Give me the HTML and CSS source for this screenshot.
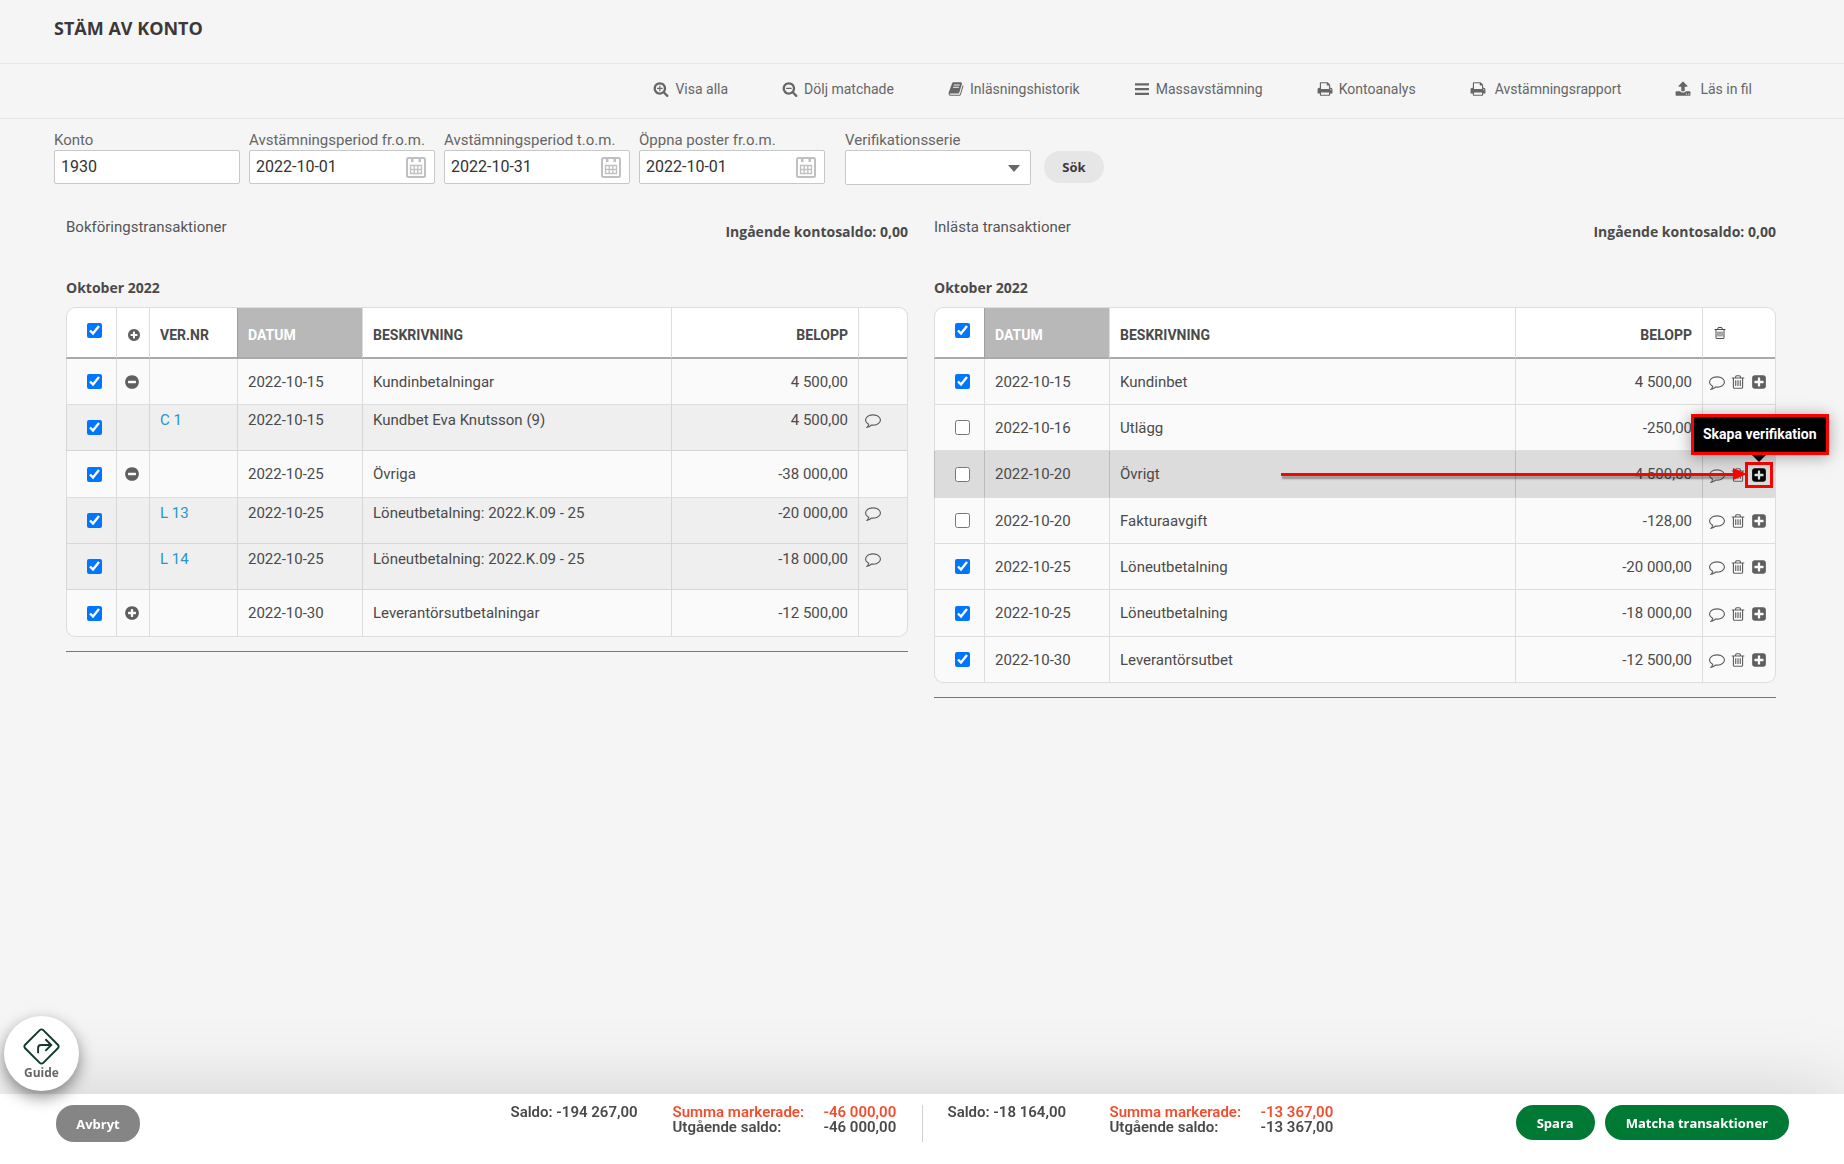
FILE: index.html
```
<!DOCTYPE html>
<html lang="sv">
<head>
    <meta charset="UTF-8">
    <meta name="viewport" content="width=device-width, initial-scale=1.0">
    <title>Stäm av konto</title>
    <link rel="stylesheet" href="styles.css">
</head>
<body>
    <!-- Ikoner -->
    <svg class="sprite" aria-hidden="true">
        <symbol id="i-zoomin" viewBox="0 0 1792 1792"><path d="M1088 800v64q0 13-9.5 22.5t-22.5 9.5h-224v224q0 13-9.5 22.5t-22.5 9.5h-64q-13 0-22.5-9.5t-9.5-22.5v-224h-224q-13 0-22.5-9.5t-9.5-22.5v-64q0-13 9.5-22.5t22.5-9.5h224v-224q0-13 9.5-22.5t22.5-9.5h64q13 0 22.5 9.5t9.5 22.5v224h224q13 0 22.5 9.5t9.5 22.5zm128 32q0-185-131.5-316.5t-316.5-131.5-316.5 131.5-131.5 316.5 131.5 316.5 316.5 131.5 316.5-131.5 131.5-316.5zm512 832q0 53-37.5 90.5t-90.5 37.5q-54 0-90-38l-343-342q-179 124-399 124-143 0-273.5-55.5t-225-150-150-225-55.5-273.5 55.5-273.5 150-225 225-150 273.5-55.5 273.5 55.5 225 150 150 225 55.5 273.5q0 220-124 399l343 343q37 37 37 90z"/></symbol>
        <symbol id="i-zoomout" viewBox="0 0 1792 1792"><path d="M1088 800v64q0 13-9.5 22.5t-22.5 9.5h-576q-13 0-22.5-9.5t-9.5-22.5v-64q0-13 9.5-22.5t22.5-9.5h576q13 0 22.5 9.5t9.5 22.5zm128 32q0-185-131.5-316.5t-316.5-131.5-316.5 131.5-131.5 316.5 131.5 316.5 316.5 131.5 316.5-131.5 131.5-316.5zm512 832q0 53-37.5 90.5t-90.5 37.5q-54 0-90-38l-343-342q-179 124-399 124-143 0-273.5-55.5t-225-150-150-225-55.5-273.5 55.5-273.5 150-225 225-150 273.5-55.5 273.5 55.5 225 150 150 225 55.5 273.5q0 220-124 399l343 343q37 37 37 90z"/></symbol>
        <symbol id="i-book" viewBox="0 0 1792 1792"><path d="M1703 478q40 57 18 129l-275 906q-19 64-76.5 107.5t-122.5 43.5h-923q-77 0-148.5-53.5t-99.5-131.5q-24-67-2-127 0-4 3-27t4-37q1-8-3-21.5t-3-19.5q2-11 8-21t16.5-23.5 16.5-23.5q23-38 45-91.5t30-91.5q3-10 .5-30t-.5-28q3-11 17-28t17-23q21-36 42-92t25-90q1-9-2.5-32t.5-28q4-13 22-30.5t22-22.5q19-26 42.5-84.5t27.5-96.5q1-8-3-25.5t-2-26.5q2-8 9-18t18-23 17-21q8-12 16.5-30.5t15-35 16-36 19.5-32 26.5-23.5 36-11.5 47.5 5.5l-1 3q38-9 51-9h761q74 0 114 56t18 130l-274 906q-36 119-71.5 153.5t-128.5 34.5h-869q-27 0-38 15-11 16-1 43 24 70 144 70h923q29 0 56-15.5t35-41.5l300-987q7-22 5-57 38 15 59 43zm-1064 2q-4 13 2 22.5t20 9.5h608q13 0 25.5-9.5t16.5-22.5l21-64q4-13-2-22.5t-20-9.5h-608q-13 0-25.5 9.5t-16.5 22.5zm-83 256q-4 13 2 22.5t20 9.5h608q13 0 25.5-9.5t16.5-22.5l21-64q4-13-2-22.5t-20-9.5h-608q-13 0-25.5 9.5t-16.5 22.5z"/></symbol>
        <symbol id="i-bars" viewBox="0 0 16 16"><path d="M1 2.200h14v2.200H1zM1 7h14v2.200H1zM1 11.800h14V14H1z"/></symbol>
        <symbol id="i-print" viewBox="0 0 1792 1792"><path d="M448 1536h896v-256h-896v256zm0-640h896v-384h-160q-40 0-68-28t-28-68v-160h-640v640zm1152 64q0-26-19-45t-45-19-45 19-19 45 19 45 45 19 45-19 19-45zm128 0v416q0 13-9.5 22.5t-22.5 9.5h-224v160q0 40-28 68t-68 28h-960q-40 0-68-28t-28-68v-160h-224q-13 0-22.5-9.5t-9.5-22.5v-416q0-79 56.5-135.5t135.5-56.5h64v-544q0-40 28-68t68-28h672q40 0 88 20t76 48l152 152q28 28 48 76t20 88v256h64q79 0 135.5 56.5t56.5 135.5z"/></symbol>
        <symbol id="i-upload" viewBox="0 0 1792 1792"><path d="M1344 1472q0-26-19-45t-45-19-45 19-19 45 19 45 45 19 45-19 19-45zm256 0q0-26-19-45t-45-19-45 19-19 45 19 45 45 19 45-19 19-45zm128-224v320q0 40-28 68t-68 28h-1472q-40 0-68-28t-28-68v-320q0-40 28-68t68-28h427q21 56 70.500 92t110.500 36h256q61 0 110.500-36t70.500-92h427q40 0 68 28t28 68zm-325-648q-17 40-59 40h-256v448q0 26-19 45t-45 19h-256q-26 0-45-19t-19-45v-448h-256q-42 0-59-40-17-39 14-69l448-448q18-19 45-19t45 19l448 448q31 30 14 69z"/></symbol>
        <symbol id="i-plus" viewBox="0 0 1792 1792"><path d="M1344 960v-128q0-26-19-45t-45-19h-256v-256q0-26-19-45t-45-19h-128q-26 0-45 19t-19 45v256h-256q-26 0-45 19t-19 45v128q0 26 19 45t45 19h256v256q0 26 19 45t45 19h128q26 0 45-19t19-45v-256h256q26 0 45-19t19-45zm320-64q0 209-103 385.5t-279.5 279.5-385.5 103-385.5-103-279.5-279.5-103-385.5 103-385.5 279.5-279.5 385.5-103 385.5 103 279.5 279.5 103 385.5z"/></symbol>
        <symbol id="i-minus" viewBox="0 0 1792 1792"><path d="M1344 960v-128q0-26-19-45t-45-19h-768q-26 0-45 19t-19 45v128q0 26 19 45t45 19h768q26 0 45-19t19-45zm320-64q0 209-103 385.5t-279.5 279.5-385.5 103-385.5-103-279.5-279.5-103-385.5 103-385.5 279.5-279.5 385.5-103 385.5 103 279.5 279.5 103 385.5z"/></symbol>
        <symbol id="i-square" viewBox="0 0 1792 1792"><path d="M1408 960v-128q0-26-19-45t-45-19h-320v-320q0-26-19-45t-45-19h-128q-26 0-45 19t-19 45v320h-320q-26 0-45 19t-19 45v128q0 26 19 45t45 19h320v320q0 26 19 45t45 19h128q26 0 45-19t19-45v-320h320q26 0 45-19t19-45zm256-544v960q0 119-84.5 203.5t-203.5 84.5h-960q-119 0-203.5-84.5t-84.5-203.5v-960q0-119 84.5-203.5t203.5-84.5h960q119 0 203.5 84.5t84.5 203.5z"/></symbol>
        <symbol id="i-comment" viewBox="0 0 1792 1792"><path d="M896 384q-204 0-381.5 69.5t-282 187.5-104.5 255q0 112 71.5 213.5t201.5 175.5l87 50-27 96q-24 91-70 172 152-63 275-171l43-38 57 6q69 8 130 8 204 0 381.5-69.5t282-187.5 104.5-255-104.5-255-282-187.5-381.5-69.5zm896 512q0 174-120 321.5t-326 233-450 85.5q-70 0-145-8-198 175-460 242-49 14-114 22h-5q-15 0-27-10.5t-16-27.5v-1q-3-4-.5-12t2-10 4.5-9.5l6-9 7-8.5 8-9q7-8 31-34.5t34.5-38 31-39.5 32.5-51 27-59 26-76q-157-89-247.5-220t-90.5-281q0-174 120-321.5t326-233 450-85.5 450 85.5 326 233 120 321.5z"/></symbol>
        <symbol id="i-trash" viewBox="0 0 1792 1792"><path d="M704 736v576q0 14-9 23t-23 9h-64q-14 0-23-9t-9-23v-576q0-14 9-23t23-9h64q14 0 23 9t9 23zm256 0v576q0 14-9 23t-23 9h-64q-14 0-23-9t-9-23v-576q0-14 9-23t23-9h64q14 0 23 9t9 23zm256 0v576q0 14-9 23t-23 9h-64q-14 0-23-9t-9-23v-576q0-14 9-23t23-9h64q14 0 23 9t9 23zm128 724v-948h-896v948q0 22 7 40.5t14.5 27 10.5 8.5h832q3 0 10.5-8.5t14.5-27 7-40.5zm-672-1076h448l-48-117q-7-9-17-11h-317q-10 2-17 11zm928 32v64q0 14-9 23t-23 9h-96v948q0 83-47 143.5t-113 60.5h-832q-66 0-113-58.5t-47-141.5v-952h-96q-14 0-23-9t-9-23v-64q0-14 9-23t23-9h309l70-167q15-37 54-63t79-26h320q40 0 79 26t54 63l70 167h309q14 0 23 9t9 23z"/></symbol>
        <symbol id="i-calendar" viewBox="0 0 20 21"><rect x="1" y="1" width="18" height="19" rx="1.500" fill="none" stroke="currentColor" stroke-width="2"/><path d="M5 1h2.500v4H5zM12.500 1H15v4h-2.500z" fill="currentColor"/><path d="M4.500 8.500h11v8h-11zM4.500 12.500h11M8.200 8.500v8M11.800 8.500v8" fill="none" stroke="currentColor" stroke-width="1.300"/></symbol>
    </svg>

    <header class="top">
        <h1>STÄM AV KONTO</h1>
    </header>

    <!-- Verktygsrad -->
    <nav class="tools">
        <a href="#"><svg class="icon"><use href="#i-zoomin"/></svg>Visa alla</a>
        <a href="#"><svg class="icon"><use href="#i-zoomout"/></svg>Dölj matchade</a>
        <a href="#"><svg class="icon"><use href="#i-book"/></svg>Inläsningshistorik</a>
        <a href="#"><svg class="icon"><use href="#i-bars"/></svg>Massavstämning</a>
        <a href="#"><svg class="icon"><use href="#i-print"/></svg>Kontoanalys</a>
        <a href="#" class="wide"><svg class="icon"><use href="#i-print"/></svg>Avstämningsrapport</a>
        <a href="#" class="wide"><svg class="icon"><use href="#i-upload"/></svg>Läs in fil</a>
    </nav>

    <!-- Urval -->
    <form class="filter">
        <div class="field">
            <label for="konto">Konto</label>
            <input type="text" id="konto" value="1930">
        </div>
        <div class="field">
            <label for="from">Avstämningsperiod fr.o.m.</label>
            <input type="text" id="from" value="2022-10-01">
            <svg class="cal"><use href="#i-calendar"/></svg>
        </div>
        <div class="field">
            <label for="tom">Avstämningsperiod t.o.m.</label>
            <input type="text" id="tom" value="2022-10-31">
            <svg class="cal"><use href="#i-calendar"/></svg>
        </div>
        <div class="field">
            <label for="open">Öppna poster fr.o.m.</label>
            <input type="text" id="open" value="2022-10-01">
            <svg class="cal"><use href="#i-calendar"/></svg>
        </div>
        <div class="field serie">
            <label for="serie">Verifikationsserie</label>
            <select id="serie"><option></option></select>
        </div>
        <button type="button" class="btn sok">Sök</button>
    </form>

    <main class="cols">
        <!-- Bokföringstransaktioner -->
        <section>
            <div class="head">
                <p>Bokföringstransaktioner</p>
                <strong>Ingående kontosaldo: 0,00</strong>
            </div>
            <h2>Oktober 2022</h2>
            <table>
                <colgroup>
                    <col class="c-check"><col class="c-fold"><col class="c-ver"><col class="c-date"><col><col class="c-sum"><col class="c-note">
                </colgroup>
                <thead>
                    <tr>
                        <th class="check"><input type="checkbox" aria-label="Markera alla" checked></th>
                        <th class="fold"><button type="button" aria-label="Visa alla rader"><svg class="icon small"><use href="#i-plus"/></svg></button></th>
                        <th>VER.NR</th>
                        <th class="sorted">DATUM</th>
                        <th>BESKRIVNING</th>
                        <th class="sum">BELOPP</th>
                        <th></th>
                    </tr>
                </thead>
                <tbody>
                    <tr>
                        <td class="check"><input type="checkbox" aria-label="Markera" checked></td>
                        <td class="fold"><button type="button" aria-label="Dölj"><svg class="icon"><use href="#i-minus"/></svg></button></td>
                        <td></td>
                        <td>2022-10-15</td>
                        <td>Kundinbetalningar</td>
                        <td class="sum">4 500,00</td>
                        <td></td>
                    </tr>
                    <tr class="sub">
                        <td class="check"><input type="checkbox" aria-label="Markera" checked></td>
                        <td></td>
                        <td><a href="#">C 1</a></td>
                        <td>2022-10-15</td>
                        <td>Kundbet Eva Knutsson (9)</td>
                        <td class="sum">4 500,00</td>
                        <td class="acts"><button type="button" aria-label="Kommentar"><svg class="icon"><use href="#i-comment"/></svg></button></td>
                    </tr>
                    <tr>
                        <td class="check"><input type="checkbox" aria-label="Markera" checked></td>
                        <td class="fold"><button type="button" aria-label="Dölj"><svg class="icon"><use href="#i-minus"/></svg></button></td>
                        <td></td>
                        <td>2022-10-25</td>
                        <td>Övriga</td>
                        <td class="sum">-38 000,00</td>
                        <td></td>
                    </tr>
                    <tr class="sub">
                        <td class="check"><input type="checkbox" aria-label="Markera" checked></td>
                        <td></td>
                        <td><a href="#">L 13</a></td>
                        <td>2022-10-25</td>
                        <td>Löneutbetalning: 2022.K.09 - 25</td>
                        <td class="sum">-20 000,00</td>
                        <td class="acts"><button type="button" aria-label="Kommentar"><svg class="icon"><use href="#i-comment"/></svg></button></td>
                    </tr>
                    <tr class="sub">
                        <td class="check"><input type="checkbox" aria-label="Markera" checked></td>
                        <td></td>
                        <td><a href="#">L 14</a></td>
                        <td>2022-10-25</td>
                        <td>Löneutbetalning: 2022.K.09 - 25</td>
                        <td class="sum">-18 000,00</td>
                        <td class="acts"><button type="button" aria-label="Kommentar"><svg class="icon"><use href="#i-comment"/></svg></button></td>
                    </tr>
                    <tr>
                        <td class="check"><input type="checkbox" aria-label="Markera" checked></td>
                        <td class="fold"><button type="button" aria-label="Visa"><svg class="icon"><use href="#i-plus"/></svg></button></td>
                        <td></td>
                        <td>2022-10-30</td>
                        <td>Leverantörsutbetalningar</td>
                        <td class="sum">-12 500,00</td>
                        <td></td>
                    </tr>
                </tbody>
            </table>
            <hr>
        </section>

        <!-- Inlästa transaktioner -->
        <section>
            <div class="head">
                <p>Inlästa transaktioner</p>
                <strong>Ingående kontosaldo: 0,00</strong>
            </div>
            <h2>Oktober 2022</h2>
            <table>
                <colgroup>
                    <col class="c-check"><col class="c-date"><col><col class="c-sum"><col class="c-acts">
                </colgroup>
                <thead>
                    <tr>
                        <th class="check"><input type="checkbox" aria-label="Markera alla" checked></th>
                        <th class="sorted">DATUM</th>
                        <th>BESKRIVNING</th>
                        <th class="sum">BELOPP</th>
                        <th class="del"><button type="button" aria-label="Ta bort alla"><svg class="icon small"><use href="#i-trash"/></svg></button></th>
                    </tr>
                </thead>
                <tbody>
                    <tr>
                        <td class="check"><input type="checkbox" aria-label="Markera" checked></td>
                        <td>2022-10-15</td>
                        <td>Kundinbet</td>
                        <td class="sum">4 500,00</td>
                        <td class="acts">
                            <div>
                                <button type="button" aria-label="Kommentar"><svg class="icon"><use href="#i-comment"/></svg></button>
                                <button type="button" aria-label="Ta bort"><svg class="icon"><use href="#i-trash"/></svg></button>
                                <button type="button" aria-label="Skapa verifikation"><svg class="icon"><use href="#i-square"/></svg></button>
                            </div>
                        </td>
                    </tr>
                    <tr>
                        <td class="check"><input type="checkbox" aria-label="Markera"></td>
                        <td>2022-10-16</td>
                        <td>Utlägg</td>
                        <td class="sum">-250,00</td>
                        <td class="acts">
                            <div>
                                <button type="button" aria-label="Kommentar"><svg class="icon"><use href="#i-comment"/></svg></button>
                                <button type="button" aria-label="Ta bort"><svg class="icon"><use href="#i-trash"/></svg></button>
                                <button type="button" aria-label="Skapa verifikation"><svg class="icon"><use href="#i-square"/></svg></button>
                            </div>
                        </td>
                    </tr>
                    <tr class="active">
                        <td class="check"><input type="checkbox" aria-label="Markera"></td>
                        <td>2022-10-20</td>
                        <td>Övrigt</td>
                        <td class="sum">4 500,00</td>
                        <td class="acts">
                            <div>
                                <button type="button" aria-label="Kommentar"><svg class="icon"><use href="#i-comment"/></svg></button>
                                <button type="button" aria-label="Ta bort"><svg class="icon"><use href="#i-trash"/></svg></button>
                                <span class="target">
                                    <button type="button" aria-labelledby="tip"><svg class="icon"><use href="#i-square"/></svg></button>
                                    <span class="mark"></span>
                                    <span class="arrow"></span>
                                    <span class="tip" id="tip" role="tooltip">Skapa verifikation</span>
                                </span>
                            </div>
                        </td>
                    </tr>
                    <tr>
                        <td class="check"><input type="checkbox" aria-label="Markera"></td>
                        <td>2022-10-20</td>
                        <td>Fakturaavgift</td>
                        <td class="sum">-128,00</td>
                        <td class="acts">
                            <div>
                                <button type="button" aria-label="Kommentar"><svg class="icon"><use href="#i-comment"/></svg></button>
                                <button type="button" aria-label="Ta bort"><svg class="icon"><use href="#i-trash"/></svg></button>
                                <button type="button" aria-label="Skapa verifikation"><svg class="icon"><use href="#i-square"/></svg></button>
                            </div>
                        </td>
                    </tr>
                    <tr>
                        <td class="check"><input type="checkbox" aria-label="Markera" checked></td>
                        <td>2022-10-25</td>
                        <td>Löneutbetalning</td>
                        <td class="sum">-20 000,00</td>
                        <td class="acts">
                            <div>
                                <button type="button" aria-label="Kommentar"><svg class="icon"><use href="#i-comment"/></svg></button>
                                <button type="button" aria-label="Ta bort"><svg class="icon"><use href="#i-trash"/></svg></button>
                                <button type="button" aria-label="Skapa verifikation"><svg class="icon"><use href="#i-square"/></svg></button>
                            </div>
                        </td>
                    </tr>
                    <tr>
                        <td class="check"><input type="checkbox" aria-label="Markera" checked></td>
                        <td>2022-10-25</td>
                        <td>Löneutbetalning</td>
                        <td class="sum">-18 000,00</td>
                        <td class="acts">
                            <div>
                                <button type="button" aria-label="Kommentar"><svg class="icon"><use href="#i-comment"/></svg></button>
                                <button type="button" aria-label="Ta bort"><svg class="icon"><use href="#i-trash"/></svg></button>
                                <button type="button" aria-label="Skapa verifikation"><svg class="icon"><use href="#i-square"/></svg></button>
                            </div>
                        </td>
                    </tr>
                    <tr>
                        <td class="check"><input type="checkbox" aria-label="Markera" checked></td>
                        <td>2022-10-30</td>
                        <td>Leverantörsutbet</td>
                        <td class="sum">-12 500,00</td>
                        <td class="acts">
                            <div>
                                <button type="button" aria-label="Kommentar"><svg class="icon"><use href="#i-comment"/></svg></button>
                                <button type="button" aria-label="Ta bort"><svg class="icon"><use href="#i-trash"/></svg></button>
                                <button type="button" aria-label="Skapa verifikation"><svg class="icon"><use href="#i-square"/></svg></button>
                            </div>
                        </td>
                    </tr>
                </tbody>
            </table>
            <hr>
        </section>
    </main>

    <!-- Summering och knappar -->
    <footer class="bottom">
        <div class="left">
            <button type="button" class="btn cancel">Avbryt</button>
        </div>
        <div class="totals">
            <span>Saldo: -194 267,00</span>
            <span class="red">Summa markerade:</span>
            <span class="red">-46 000,00</span>
            <span class="under">Utgående saldo:</span>
            <span>-46 000,00</span>
        </div>
        <div class="totals">
            <span>Saldo: -18 164,00</span>
            <span class="red">Summa markerade:</span>
            <span class="red">-13 367,00</span>
            <span class="under">Utgående saldo:</span>
            <span>-13 367,00</span>
        </div>
        <div class="right">
            <button type="button" class="btn green">Spara</button>
            <button type="button" class="btn green">Matcha transaktioner</button>
        </div>
    </footer>

    <button type="button" class="guide">
        <svg viewBox="0 0 38 38"><path d="M17.200 2.200a2.500 2.500 0 0 1 3.600 0l15 15a2.500 2.500 0 0 1 0 3.600l-15 15a2.500 2.500 0 0 1-3.600 0l-15-15a2.500 2.500 0 0 1 0-3.600z"/><path d="M15.500 26v-5.500q0-3 3-3H28M23 11.500l6 6-6 6"/></svg>
        Guide
    </button>
</body>
</html>
```
FILE: styles.css
```
*{
    box-sizing: border-box;
}
body{
    margin: 0;
    min-height: 100vh;
    padding-bottom: 90px;
    background: #f5f5f5;
    color: #4a4a4a;
    font: 15px/20px Roboto, sans-serif;
}
h1, h2, p{
    margin: 0;
}
a{
    color: #2a94d0;
    text-decoration: none;
}
button{
    border: 0;
    padding: 0;
    background: none;
    color: inherit;
    cursor: pointer;
}
.sprite{
    position: absolute;
    width: 0;
    height: 0;
}
.icon{
    display: block;
    width: 16px;
    height: 16px;
    fill: currentColor;
}
.icon.small{
    width: 14px;
    height: 14px;
}

/* Rubrik */
.top{
    display: flex;
    align-items: center;
    height: 64px;
    padding: 0 54px 8px;
    border-bottom: 1px solid #e6e6e6;
}
h1{
    font: 700 18px/24px "Open Sans", sans-serif;
    color: #3c3838;
}

/* Verktygsrad */
.tools{
    display: flex;
    justify-content: flex-end;
    align-items: center;
    gap: 54px;
    height: 55px;
    padding: 0 92px 4px 54px;
    border-bottom: 1px solid #e6e6e6;
    font-size: 14px;
}
.tools a{
    display: flex;
    align-items: center;
    gap: 6px;
    color: #666;
}
.tools a.wide{
    gap: 9px;
}

/* Urval */
.filter{
    display: flex;
    gap: 9px;
    padding: 11px 54px 0;
}
.field{
    position: relative;
    width: 186px;
}
.field label{
    display: block;
    color: #666;
    white-space: nowrap;
}
.field input,
.field select{
    display: block;
    width: 100%;
    height: 34px;
    border: 1px solid #c8c8c8;
    border-radius: 2px;
    padding: 0 6px 2px;
    background: #fff;
    color: #333;
    font: 16px Roboto, sans-serif;
}
.field select{
    appearance: none;
    height: 35px;
}
.serie{
    margin-left: 11px;
}
.serie::after{
    content: "";
    position: absolute;
    right: 11px;
    bottom: 13px;
    border: 6px solid transparent;
    border-top: 7px solid #666;
    border-bottom: 0;
}
.cal{
    position: absolute;
    right: 9px;
    top: 27px;
    width: 20px;
    height: 21px;
    color: #c0c0c0;
}
.btn{
    border-radius: 18px;
    font: 700 13px/20px "Open Sans", sans-serif;
}
.sok{
    align-self: flex-end;
    width: 60px;
    height: 32px;
    margin: 0 0 2px 4px;
    background: #e6e6e6;
    color: #3c3838;
}

/* Tabeller */
.cols{
    display: grid;
    grid-template-columns: 1fr 1fr;
    gap: 26px;
    align-items: start;
    padding: 32px 68px 0 66px;
}
.head{
    display: flex;
    justify-content: space-between;
    color: #555;
}
.head strong{
    padding-top: 5px;
    font: 700 14px/20px "Open Sans", sans-serif;
    color: #4a4a4a;
}
h2{
    margin: 36px 0 9px;
    font: 700 14px/20px "Open Sans", sans-serif;
}
table{
    width: 100%;
    table-layout: fixed;
    border-collapse: separate;
    border-spacing: 0;
    border: 1px solid #ddd;
    border-width: 1px 1px 0 0;
    border-radius: 9px;
}
.c-check{ width: 50px; }
.c-fold{ width: 33px; }
.c-ver{ width: 88px; }
.c-date{ width: 125px; }
.c-sum{ width: 187px; }
.c-note{ width: 49px; }
.c-acts{ width: 73px; }
th, td{
    border: 1px solid #ddd;
    border-width: 0 0 1px 1px;
    padding: 0 10px;
    text-align: left;
    white-space: nowrap;
}
th{
    height: 51px;
    padding-top: 4px;
    border-bottom: 2px solid #aaa;
    background: #fff;
    font-size: 14px;
    font-weight: 700;
}
td{
    height: 46px;
    background: #fafafa;
}
tr:nth-child(3n) td{
    height: 47px;
}
.sub td{
    padding-top: 5px;
    background: #efefef;
    border-color: #d6d6d6;
    vertical-align: top;
}
.active td{
    background: #dcdcdc;
    border-left-color: #bbb;
}
th:first-child{ border-top-left-radius: 9px; }
th:last-child{ border-top-right-radius: 9px; }
tbody tr:last-child td:first-child{ border-bottom-left-radius: 9px; }
tbody tr:last-child td:last-child{ border-bottom-right-radius: 9px; }
th.sorted{
    background: #b8b8b8;
    border-left-color: #a0a0a0;
    color: #fff;
}
tr > .sum{
    text-align: right;
}
tr > .check{
    padding: 0 0 0 20px;
    vertical-align: middle;
}
th.check{
    padding-bottom: 4px;
}
.check input{
    display: block;
    width: 15px;
    height: 15px;
    margin: 0;
}
td.fold{
    padding: 0 0 0 7px;
}
tr > .acts{
    padding-left: 6px;
    padding-right: 0;
}
.acts button,
.fold button{
    display: block;
    color: #5f5f5f;
}
.sub .acts button{
    padding-top: 2px;
}
.acts div{
    display: flex;
    gap: 5px;
    padding-top: 1px;
}
hr{
    margin: 14px 0 0;
    border: 0;
    border-top: 1px solid #777;
}

/* Markerad ikon med tooltip */
.target{
    position: relative;
}
.acts .target button{
    color: #000;
}
.mark{
    position: absolute;
    inset: -5px -6px;
    border: 3px solid #f00;
}
.arrow{
    position: absolute;
    top: 6px;
    right: 34px;
    width: 452px;
    height: 3px;
    background: #f00;
    box-shadow: 1px 3px 2px rgba(0,0,0,.35);
}
.arrow::after{
    content: "";
    position: absolute;
    left: 100%;
    top: -5px;
    border: 6px solid transparent;
    border-left: 14px solid #f00;
    border-right: 0;
}
.tip{
    position: absolute;
    left: -60px;
    bottom: 28px;
    height: 41px;
    padding: 0 9px;
    border: 3px solid #f00;
    background: #000;
    box-shadow: 0 2px 16px rgba(0,0,0,.35);
    color: #fff;
    font-size: 14px;
    font-weight: 700;
    line-height: 35px;
}
.tip::after{
    content: "";
    position: absolute;
    left: 58px;
    top: 38px;
    border: 7px solid transparent;
    border-top-color: #000;
    border-bottom: 0;
}

/* Nederkant */
.bottom{
    position: fixed;
    left: 0;
    right: 0;
    bottom: 0;
    display: grid;
    grid-template-columns: 1fr auto auto 1fr;
    align-items: start;
    height: 70px;
    padding: 11px 55px 0 56px;
    background: #fff;
    box-shadow: 0 0 80px rgba(0,0,0,.16);
}
.totals{
    display: grid;
    grid-template-columns: 162px 151px 74px;
    height: 37px;
    align-content: start;
    padding: 0 24px 0 0;
    font-weight: 600;
    line-height: 15px;
}
.totals + .totals{
    padding: 0 0 0 25px;
    border-left: 1px solid #d0d0d0;
}
.under{
    grid-column: 2;
}
.red{
    color: #f04e30;
}
.right{
    display: flex;
    justify-content: flex-end;
    gap: 10px;
}
.cancel{
    width: 84px;
    height: 37px;
    background: #858585;
    color: #fff;
}
.green{
    height: 35px;
    padding: 0 21px;
    background: #007934;
    color: #fff;
}
.guide{
    position: fixed;
    left: 4px;
    bottom: 73px;
    display: flex;
    flex-direction: column;
    align-items: center;
    width: 75px;
    height: 75px;
    padding-top: 12px;
    border-radius: 50%;
    background: #fff;
    box-shadow: 0 6px 16px rgba(0,0,0,.45);
    color: #666;
    font: 700 12px/15px "Open Sans", sans-serif;
}
.guide svg{
    width: 37px;
    height: 37px;
    fill: none;
    stroke: #143a30;
    stroke-width: 2;
}
```
